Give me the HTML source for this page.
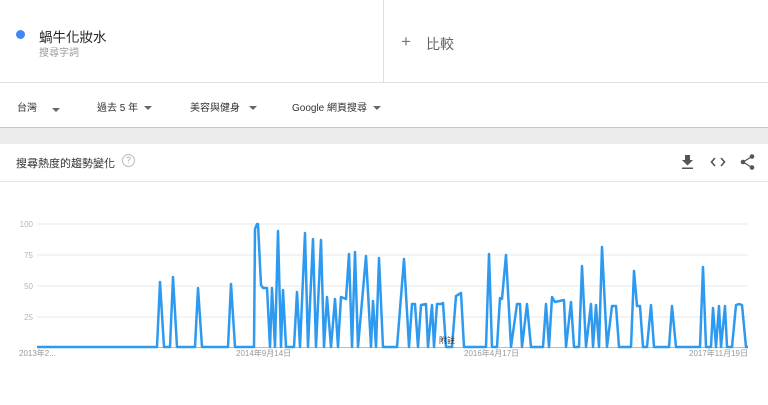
<!DOCTYPE html>
<html><head><meta charset="utf-8"><style>
*{margin:0;padding:0;box-sizing:border-box}
body{width:768px;height:405px;overflow:hidden;background:#fff;font-family:"Liberation Sans","Noto Sans CJK TC",sans-serif;position:relative}
.a{position:absolute;white-space:nowrap}
.tri{display:inline-block;width:0;height:0;border-left:4px solid transparent;border-right:4px solid transparent;border-top:4px solid #666;vertical-align:middle}
</style></head><body>
<div class="a" style="left:0;top:0;width:768px;height:83px;border-bottom:1px solid #e0e0e0"></div>
<div class="a" style="left:383px;top:0;width:1px;height:83px;background:#e0e0e0"></div>
<div class="a" style="left:16px;top:30px;width:9px;height:9px;border-radius:50%;background:#4285f4"></div>
<div class="a" style="left:39px;top:26px;font-size:13.5px;color:#222">蝸牛化妝水</div>
<div class="a" style="left:39px;top:44px;font-size:10px;color:#999">搜尋字詞</div>
<div class="a" style="left:401px;top:32px;font-size:17px;color:#777;line-height:20px">+</div>
<div class="a" style="left:426px;top:34px;font-size:14px;color:#666">比較</div>
<div class="a" style="left:17px;top:99px;font-size:10px;color:#333">台灣</div>
<div class="a" style="left:52px;top:101px"><span class="tri"></span></div>
<div class="a" style="left:97px;top:99px;font-size:10px;color:#333">過去 5 年 <span class="tri" style="margin-left:3px"></span></div>
<div class="a" style="left:190px;top:99px;font-size:10px;color:#333">美容與健身 <span class="tri" style="margin-left:6px"></span></div>
<div class="a" style="left:292px;top:99px;font-size:10px;color:#333">Google 網頁搜尋 <span class="tri" style="margin-left:3px"></span></div>
<div class="a" style="left:0;top:127px;width:768px;height:17px;background:#ececec;border-top:1px solid #c8c8c8"></div>
<div class="a" style="left:16px;top:155px;font-size:11px;color:#333">搜尋熱度的趨勢變化</div>
<div class="a" style="left:122px;top:154px;width:13px;height:13px;border:1px solid #bbb;border-radius:50%;font-size:9px;color:#aaa;text-align:center;line-height:11px">?</div>
<svg class="a" style="left:680px;top:152px" width="80" height="20" viewBox="0 0 80 20">
<path d="M5 3h5v5h3l-5.5 5.5L2 8h3z M2 15.5h11v1.5H2z" fill="#555"/>
<path d="M35 6l-3.5 4 3.5 4 M41 6l3.5 4-3.5 4" stroke="#555" stroke-width="1.6" fill="none"/>
<circle cx="72" cy="4.5" r="2.3" fill="#555"/><circle cx="63" cy="10" r="2.3" fill="#555"/><circle cx="72" cy="15.5" r="2.3" fill="#555"/>
<path d="M72 4.5L63 10l9 5.5" stroke="#555" stroke-width="1.3" fill="none"/>
</svg>
<div class="a" style="left:0;top:181px;width:768px;height:1px;background:#e5e5e5"></div>
<svg class="a" style="left:0;top:200px" width="768" height="170" viewBox="0 200 768 170">
<g stroke="#e8e8e8" stroke-width="1">
<line x1="37" y1="224" x2="748" y2="224"/><line x1="37" y1="255" x2="748" y2="255"/><line x1="37" y1="286" x2="748" y2="286"/><line x1="37" y1="317" x2="748" y2="317"/>
</g>
<line x1="37" y1="347.5" x2="748" y2="347.5" stroke="#bbb"/>
<g font-size="8" fill="#b5b5b5" font-family="Liberation Sans,sans-serif" text-anchor="end">
<text x="33" y="227">100</text><text x="33" y="258">75</text><text x="33" y="289">50</text><text x="33" y="320">25</text>
</g>
<g font-size="8" fill="#999" font-family="Liberation Sans,'Noto Sans CJK TC',sans-serif">
<text x="19" y="356">2013年2...</text><text x="236" y="356">2014年9月14日</text><text x="464" y="356">2016年4月17日</text><text x="689" y="356">2017年11月19日</text>
</g>
<polyline fill="none" stroke="#2d9af0" stroke-width="2.5" stroke-linejoin="round" points="37,347 157,347 160,282 164,347 170,347 173,277 177,347 195,347 198,288 202,347 228,347 231,284 235,347 254,347 255,229 257,224 258,224 261,285 263,288 267,288 270,347 272,288 275,347 278,231 281,347 283,290 286,347 294,347 297,292 300,347 305,233 308,347 313,239 316,347 321,240 324,347 327,297 331,347 335,299 338,347 341,297 346,299 349,254 352,347 355,252 358,347 366,256 371,347 373,301 376,347 379,258 383,347 397,347 404,259 409,347 412,304 415,304 418,347 421,305 426,304 428,347 432,305 434,347 437,304 441,304 443,303 446,347 452,347 456,296 461,293 464,347 486,347 489,254 492,347 497,347 500,298 502,299 506,255 511,347 517,304 520,304 522,347 527,304 531,347 543,347 546,304 549,347 552,297 555,302 564,300 566,347 571,302 574,347 579,347 582,266 586,347 591,304 593,347 596,305 599,347 602,247 607,347 612,306 616,306 619,347 631,347 634,271 637,306 640,306 643,347 647,347 651,305 654,347 669,347 672,306 676,347 700,347 703,267 706,347 711,347 713,308 716,347 719,306 721,347 725,306 727,347 732,347 736,305 739,304 742,305 746,347 748,347"/>
<text x="439" y="343" font-size="8" fill="#333" font-family="Liberation Sans,'Noto Sans CJK TC',sans-serif">附註</text>
</svg>
</body></html>
